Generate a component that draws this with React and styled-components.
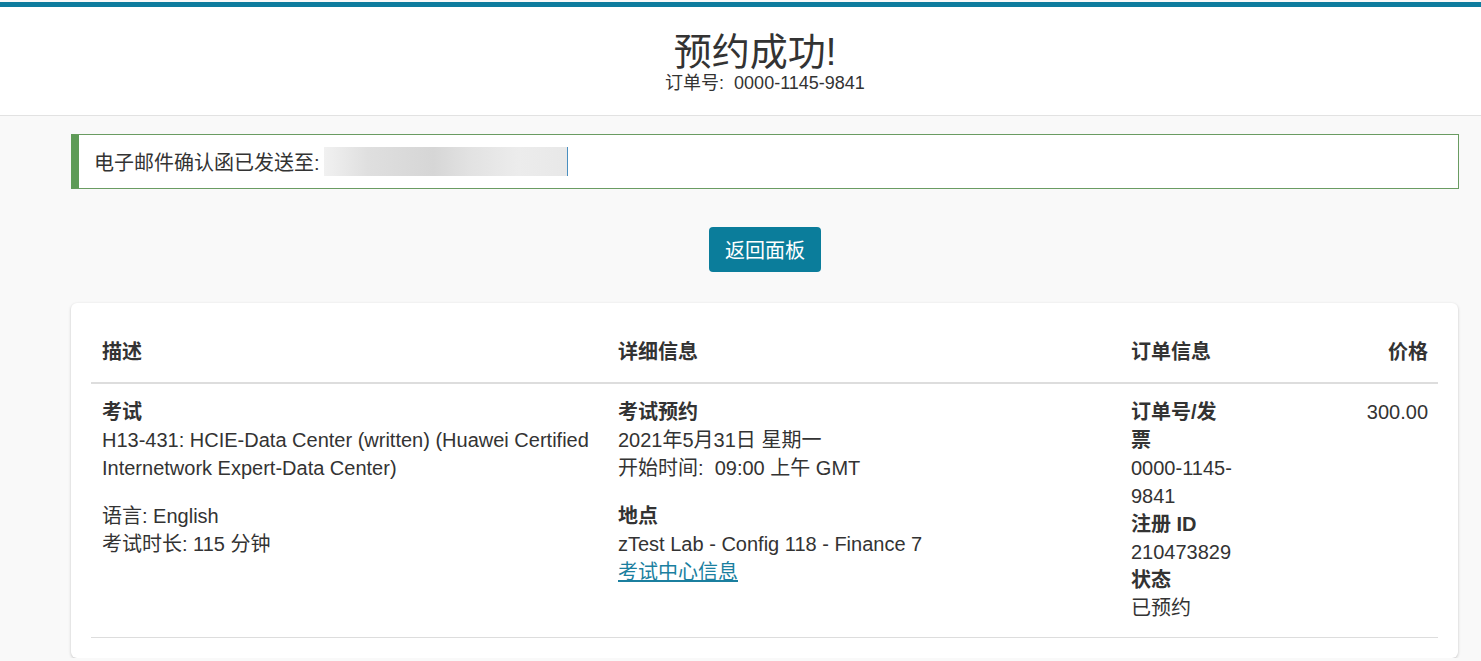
import React from 'react';
import styled, { createGlobalStyle } from 'styled-components';

const GlobalStyle = createGlobalStyle`
    html, body {
        margin: 0;
        padding: 0;
        background: #f9f9f9;
        font-family: "Liberation Sans", "Noto Sans CJK SC", sans-serif;
        color: #333;
    }
`;

const TopBar = styled.div`
    height: 5px;
    margin-top: 2px;
    background: #0e7c9e;
`;

const Header = styled.header`
    background: #fff;
    border-bottom: 1px solid #e2e2e2;
    padding: 25px 0 21px 49px;
    text-align: center;
`;

const Title = styled.h1`
    margin: 0;
    padding-right: 20px;
    font-size: 38px;
    line-height: 40px;
    font-weight: 400;
    color: #333;
`;

const OrderNo = styled.div`
    font-size: 18px;
    line-height: 22px;
    color: #333;
`;

const Main = styled.main`
    padding: 18px 22px 0 71px;
    display: flex;
    flex-direction: column;
`;

const Alert = styled.div`
    display: flex;
    align-items: center;
    height: 55px;
    box-sizing: border-box;
    background: #fff;
    border: 1px solid #6a9c62;
    border-left: 8px solid #5e9b57;
    padding-left: 15px;
    font-size: 20px;
`;

const Blurred = styled.span`
    display: inline-block;
    width: 243px;
    height: 29px;
    margin-left: 4px;
    background: linear-gradient(90deg, #f1f1f1 0%, #dfdfdf 18%, #d6d6d6 45%, #e2e2e2 60%, #ececec 80%, #e8e8e8 100%);
    border-right: 1px solid #4a8fc0;
    filter: blur(0.6px);
`;

const ButtonRow = styled.div`
    display: flex;
    justify-content: center;
    margin: 38px 0 31px;
`;

const Button = styled.button`
    height: 45px;
    padding: 0 16px;
    border: none;
    border-radius: 4px;
    background: #0b7d9b;
    color: #fff;
    font-family: inherit;
    font-size: 20px;
    cursor: pointer;
`;

const Card = styled.section`
    background: #fff;
    border-radius: 6px;
    box-shadow: 0 1px 3px rgba(0, 0, 0, 0.22);
    padding: 20px;
    margin-right: 1px;
`;

const Row = styled.div`
    display: grid;
    grid-template-columns: 516px 513px 126px 1fr;
    border-bottom: ${(p) => (p.$head ? '2px solid #ddd' : '1px solid #ddd')};
`;

const Cell = styled.div`
    padding: ${(p) => (p.$head ? '15px 11px 16px' : '14px 11px 15px')};
    padding-right: ${(p) => (p.$right ? '10px' : '11px')};
    font-size: 20px;
    line-height: 28px;
    font-weight: ${(p) => (p.$head ? 700 : 400)};
    text-align: ${(p) => (p.$right ? 'right' : 'left')};
`;

const Block = styled.div`
    & + & {
        margin-top: 20px;
    }
`;

const Label = styled.div`
    font-weight: 700;
`;

const Line = styled.div``;

const Link = styled.a`
    color: #1b7f9f;
    text-decoration: underline;
    cursor: pointer;
`;

export default function App() {
    return (
        <>
            <GlobalStyle />
            <TopBar />
            <Header>
                <Title>预约成功!</Title>
                <OrderNo>订单号:&nbsp; 0000-1145-9841</OrderNo>
            </Header>
            <Main>
                <Alert>
                    电子邮件确认函已发送至:
                    <Blurred />
                </Alert>
                <ButtonRow>
                    <Button>返回面板</Button>
                </ButtonRow>
                <Card>
                    <Row $head>
                        <Cell $head>描述</Cell>
                        <Cell $head>详细信息</Cell>
                        <Cell $head>订单信息</Cell>
                        <Cell $head $right>价格</Cell>
                    </Row>
                    <Row>
                        <Cell>
                            <Block>
                                <Label>考试</Label>
                                <Line>H13-431: HCIE-Data Center (written) (Huawei Certified Internetwork Expert-Data Center)</Line>
                            </Block>
                            <Block>
                                <Line>语言: English</Line>
                                <Line>考试时长: 115 分钟</Line>
                            </Block>
                        </Cell>
                        <Cell>
                            <Block>
                                <Label>考试预约</Label>
                                <Line>2021年5月31日 星期一</Line>
                                <Line>开始时间:&nbsp; 09:00 上午 GMT</Line>
                            </Block>
                            <Block>
                                <Label>地点</Label>
                                <Line>zTest Lab - Config 118 - Finance 7</Line>
                                <Link>考试中心信息</Link>
                            </Block>
                        </Cell>
                        <Cell>
                            <Label>订单号/发票</Label>
                            <Line>0000-1145-9841</Line>
                            <Label>注册 ID</Label>
                            <Line>210473829</Line>
                            <Label>状态</Label>
                            <Line>已预约</Line>
                        </Cell>
                        <Cell $right>300.00</Cell>
                    </Row>
                </Card>
            </Main>
        </>
    );
}
